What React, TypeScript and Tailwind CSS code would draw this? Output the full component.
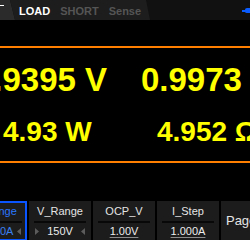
import React from "react";

const Arrow = ({ dir }: { dir: "right" | "left" }) => (
  <svg width="4" height="7" viewBox="0 0 4 7" className="shrink-0">
    <path d={dir === "right" ? "M0 0L4 3.5L0 7Z" : "M4 0L0 3.5L4 7Z"} fill="#5c5c5c" />
  </svg>
);

const Key = ({
  label,
  value,
  arrows,
  underline,
  active,
}: {
  label: string;
  value: string;
  arrows?: boolean;
  underline?: boolean;
  active?: boolean;
}) => (
  <div
    className={
      active
        ? "w-[62px] h-[40px] shrink-0 bg-[#1c1c1c] border-2 border-[#0a55ff] pt-[1px] flex flex-col"
        : "w-[62px] h-[40px] shrink-0 bg-[#1c1c1c] pt-[3px] flex flex-col"
    }
  >
    <div
      className={
        active
          ? "text-[11px] leading-[14px] text-center text-[#2a78ff] whitespace-nowrap"
          : "text-[11px] leading-[14px] text-center text-[#e4e4e4] whitespace-nowrap"
      }
    >
      {label}
    </div>
    <div className={active ? "mt-[3px] mx-[3px] h-[2px] bg-[#080808]" : "mt-[3px] mx-[5px] h-[2px] bg-[#080808]"} />
    <div
      className={
        active
          ? "mt-[1px] h-[14px] flex items-center justify-between px-[4px]"
          : arrows
          ? "mt-[1px] h-[14px] flex items-center justify-between px-[6px]"
          : "mt-[1px] h-[14px] flex items-center justify-center"
      }
    >
      {arrows && <Arrow dir="right" />}
      <span
        className={
          (active ? "text-[#3b80f0] " : "text-[#ececec] ") +
          (underline
            ? "text-[11px] leading-[14px] whitespace-nowrap underline decoration-[#8a8a8a] decoration-1 underline-offset-[2px]"
            : "text-[11px] leading-[14px] whitespace-nowrap")
        }
      >
        {value}
      </span>
      {arrows && <Arrow dir="left" />}
    </div>
  </div>
);

export default function App() {
  return (
    <div className="w-[250px] h-[240px] bg-black overflow-hidden font-['Liberation_Sans',Arial,sans-serif]">
      {/* top bar */}
      <div className="h-[20px] bg-[#111111] flex">
        <div className="w-[15px] h-[20px] shrink-0 bg-[#2b2b2b] [clip-path:polygon(0_0,10px_0,15px_100%,0_100%)] pt-[5px]">
          <div className="w-[4px] h-[1px] bg-white" />
        </div>
        <div className="-ml-[5px] w-[140px] h-[20px] shrink-0 bg-[#1d1d1d] [clip-path:polygon(0_0,136px_0,140px_100%,5px_100%)] flex items-start pl-[9px] pt-[2px] gap-[10px] text-[11px] leading-[19px] font-bold whitespace-nowrap">
          <span className="text-white">LOAD</span>
          <span className="text-[#555555]">SHORT</span>
          <span className="text-[#555555]">Sense</span>
        </div>
        <div className="ml-auto h-[20px] flex items-center">
          <svg width="8" height="20" viewBox="0 0 8 20">
            <rect x="0" y="10" width="4" height="2" fill="#0a5cff" />
            <path d="M3 9.5 Q3 8 5 8 L8 8 L8 13 L5 13 Q3 13 3 11.5 Z" fill="#0a5cff" />
          </svg>
        </div>
      </div>

      <div className="h-[26px]" />
      <div className="h-[2px] bg-[#ff8000]" />

      <div className="-ml-[40px] w-[330px] font-bold text-[#ffff00] whitespace-nowrap">
        <div className="mt-[15px] flex text-[33px] leading-[33px]">
          <div className="w-[181px] shrink-0 pl-[15px]">0.9395 V</div>
          <div className="shrink-0">0.9973 A</div>
        </div>
        <div className="mt-[22px] flex text-[28px] leading-[28px]">
          <div className="w-[197px] shrink-0 pl-[43px]">4.93 W</div>
          <div className="shrink-0">4.952 Ω</div>
        </div>
      </div>

      <div className="mt-[15px] h-[2px] bg-[#ff8000]" />

      <div className="mt-[38px] -ml-[35px] flex gap-[2px]">
        <Key label="I_Range" value="30.00A" arrows active />
        <Key label="V_Range" value="150V" arrows />
        <Key label="OCP_V" value="1.00V" underline />
        <Key label="I_Step" value="1.000A" underline />
        <div className="w-[62px] h-[40px] shrink-0 bg-[#1c1c1c] flex items-center justify-center text-[13px] text-[#e4e4e4] whitespace-nowrap">
          Page 1/2
        </div>
      </div>
    </div>
  );
}
